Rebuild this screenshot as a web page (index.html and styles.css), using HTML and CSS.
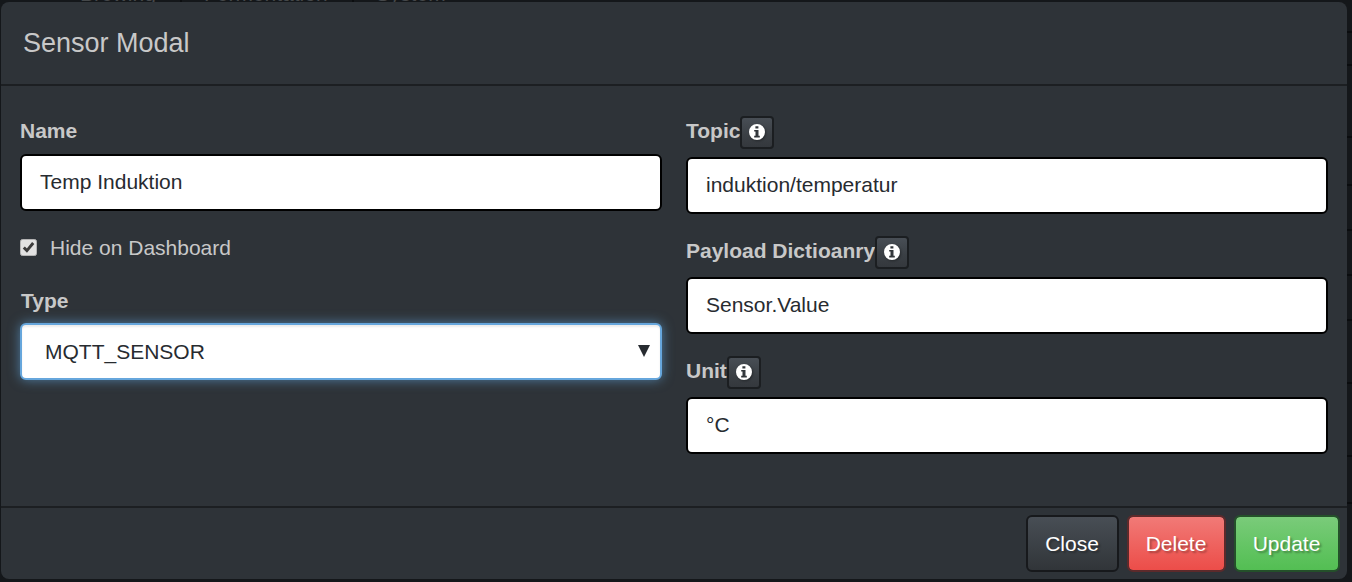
FILE: index.html
```html
<!DOCTYPE html>
<html lang="en">
<head>
<meta charset="utf-8">
<title>Sensor Modal</title>
<link rel="stylesheet" href="styles.css">
</head>
<body>
<svg class="sprite" aria-hidden="true">
  <symbol id="info" viewBox="0 0 16 16">
    <path fill="currentColor" fill-rule="evenodd" d="M8 0a8 8 0 1 1 0 16A8 8 0 0 1 8 0zM6.4 2.2v2.4h3V2.2zM5.2 6v1.5h1.3v4.3H5.2v1.6h5.6v-1.6H9.5V6z"/>
  </symbol>
</svg>
<nav class="backdrop-nav"><span>Brewing</span><span>Fermentation</span><span>System</span></nav>
<div class="edge-rows"><i></i><i></i><i></i><i></i><i></i><i></i><i></i><i></i><i></i><i></i></div>
<div class="modal">
  <header class="modal-header"><h1 class="modal-title">Sensor Modal</h1></header>
  <main class="modal-body">
    <section class="column">
      <label class="label name-label">Name</label>
      <div class="control">Temp Induktion</div>
      <div class="check-row">
        <svg class="checkbox" viewBox="0 0 17 17"><rect x=".5" y=".5" width="16" height="16" rx="2" fill="#e2e2e2" stroke="#b4b4b4"/><path d="M3.8 8.4 6.9 11.6 13.2 4" fill="none" stroke="#3c3c3c" stroke-width="2.9"/></svg>
        <span>Hide on Dashboard</span>
      </div>
      <label class="label type-label">Type</label>
      <div class="control select"><span>MQTT_SENSOR</span><svg class="arrow" viewBox="0 0 12 12"><path d="M0 0h12L6 12z" fill="#272b30"/></svg></div>
    </section>
    <section class="column">
      <div class="field">
        <div class="label-row"><label class="label">Topic</label><button class="info"><svg><use href="#info"/></svg></button></div>
        <div class="control">induktion/temperatur</div>
      </div>
      <div class="field">
        <div class="label-row"><label class="label">Payload Dictioanry</label><button class="info"><svg><use href="#info"/></svg></button></div>
        <div class="control">Sensor.Value</div>
      </div>
      <div class="field">
        <div class="label-row"><label class="label">Unit</label><button class="info"><svg><use href="#info"/></svg></button></div>
        <div class="control">°C</div>
      </div>
    </section>
  </main>
  <footer class="modal-footer">
    <button class="btn close">Close</button>
    <button class="btn delete">Delete</button>
    <button class="btn update">Update</button>
  </footer>
</div>
</body>
</html>
```
FILE: styles.css
```css
* { box-sizing: border-box; }
body {
  position: relative;
  margin: 0;
  width: 1352px;
  height: 582px;
  padding: 2px 5px 3px 1px;
  overflow: hidden;
  background: #14171a;
  color: #c8c8c8;
  font: 21px/30px "Liberation Sans", Arial, sans-serif;
}
.sprite { position: absolute; width: 0; height: 0; }
.backdrop-nav {
  position: absolute;
  left: 58px;
  top: -21px;
  display: flex;
  color: #45484a;
}
.backdrop-nav span { padding: 0 24px 0 22px; border-right: 2px solid #0b0d0f; }
.backdrop-nav span:last-child { border-right: 0; }
.edge-rows {
  position: absolute;
  top: 31px;
  right: 0;
  width: 5px;
  height: 540px;
  display: flex;
  flex-direction: column;
}
.edge-rows i { border-top: 2px solid #0a0c0e; height: 33px; }
.edge-rows i:nth-child(2) { height: 72px; }
.edge-rows i:nth-child(3) { height: 48px; }
.edge-rows i:nth-child(4) { height: 45px; }
.edge-rows i:nth-child(5) { height: 45px; }
.edge-rows i:nth-child(6) { height: 45px; }
.edge-rows i:nth-child(7) { height: 63px; }
.edge-rows i:nth-child(8) { height: 73px; }
.edge-rows i:nth-child(9) { height: 47px; }
.modal {
  position: relative;
  display: flex;
  flex-direction: column;
  height: 577px;
  border-radius: 8px;
  background: #2e3338;
}
.modal-header {
  height: 84px;
  padding: 22px 22px 0;
  border-bottom: 2px solid #1c1f22;
}
.modal-title { margin: 0; font-size: 27px; line-height: 38px; font-weight: 400; }
.modal-body {
  display: grid;
  grid-template-columns: 642px 642px;
  gap: 24px;
  height: 420px;
  padding: 30px 19px 0;
}
.column { min-width: 0; }
.label { display: block; font-weight: 700; line-height: 30px; }
.name-label { margin-bottom: 8px; }
.type-label { margin: 23px 0 7px 1px; }
.control {
  height: 57px;
  padding: 11px 18px;
  border: 2px solid #000;
  border-radius: 6px;
  background: #fff;
  color: #272b30;
  line-height: 30px;
}
.check-row { display: flex; align-items: center; gap: 13px; margin-top: 22px; height: 30px; }
.checkbox { width: 17px; height: 17px; margin-top: -2px; }
.select {
  display: flex;
  justify-content: space-between;
  padding: 12px 10px 11px 23px;
  border-color: #66a6dc;
  box-shadow: inset 0 2px 2px rgba(0, 0, 0, .075), 0 0 12px rgba(102, 175, 233, .6);
}
.arrow { width: 12px; height: 12px; margin-top: 8px; }
.field { height: 120px; }
.label-row { display: flex; height: 33px; margin-bottom: 8px; }
.info {
  width: 34px;
  height: 33px;
  padding: 5px 7px 7px;
  border: 2px solid #1b1e21;
  border-radius: 4px;
  background: linear-gradient(#484e55, #3a3f44 60%, #34383d);
  color: #fff;
  line-height: 0;
}
.info svg { width: 16px; height: 16px; filter: drop-shadow(1px 1px 1px rgba(0, 0, 0, .35)); }
.modal-footer {
  display: flex;
  justify-content: flex-end;
  gap: 8px;
  height: 73px;
  padding: 7px 7px 0;
  border-top: 2px solid #1c1f22;
}
.btn {
  height: 57px;
  padding: 0 1px 0 0;
  border: 2px solid #17191c;
  border-radius: 6px;
  color: #fff;
  font: 21px/30px "Liberation Sans", Arial, sans-serif;
  text-shadow: 2px 2px 2px rgba(0, 0, 0, .3);
}
.close { width: 93px; background: linear-gradient(#484e55, #3a3f44 60%, #313539); }
.delete { width: 99px; border-color: #5c2a2b; background: linear-gradient(#f17a77, #ee5f5b 60%, #ec4d49) padding-box; }
.update { width: 106px; border-color: #24502a; background: linear-gradient(#7acb7a, #62c462 60%, #53be53) padding-box; }
```
